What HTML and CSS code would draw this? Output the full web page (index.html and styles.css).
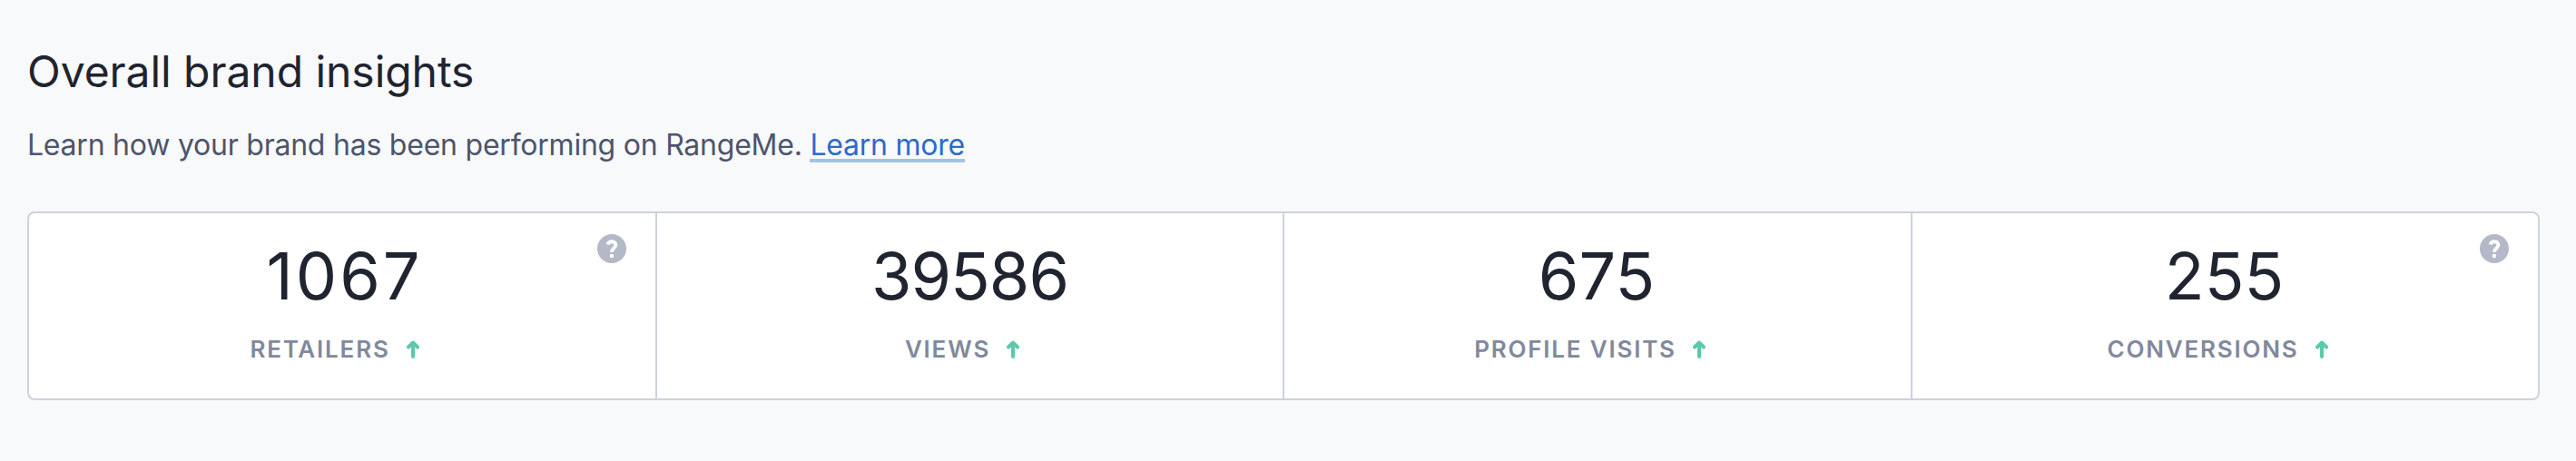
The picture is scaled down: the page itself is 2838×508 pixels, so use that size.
FILE: index.html
```html
<!DOCTYPE html>
<html lang="en">
<head>
    <meta charset="UTF-8">
    <meta name="viewport" content="width=device-width, initial-scale=1.0">
    <title>Overall brand insights</title>
    <link rel="stylesheet" href="styles.css">
</head>
<body>
    <!-- Shared icons -->
    <svg class="icon-defs" aria-hidden="true">
        <symbol id="icon-up" viewBox="0 0 14 20">
            <path d="M7 18V3M2 7.5L7 2.5l5 5" fill="none" stroke="currentColor" stroke-width="4" stroke-linecap="round" stroke-linejoin="round"/>
        </symbol>
        <symbol id="icon-help" viewBox="0 0 32 32">
            <circle cx="16" cy="16" r="16" fill="currentColor"/>
            <path d="M11.6 11.6C12.2 9.4 13.8 8.2 16 8.2c2.6 0 4.4 1.5 4.4 3.8 0 3.4-4.5 3.6-4.5 7.8" fill="none" stroke="#fff" stroke-width="3.9"/>
            <circle cx="15.9" cy="24" r="2.2" fill="#fff"/>
        </symbol>
    </svg>

    <div class="insights">
        <h1>Overall brand insights</h1>
        <p class="intro">Learn how your brand has been performing on RangeMe. <a href="#" class="learn-more">Learn more</a></p>

        <div class="stats">
            <div class="stat retailers">
                <div class="value">1067</div>
                <div class="label"><span>Retailers</span><svg class="arrow"><use href="#icon-up"/></svg></div>
                <svg class="help"><use href="#icon-help"/></svg>
            </div>
            <div class="stat views">
                <div class="value">39586</div>
                <div class="label"><span>Views</span><svg class="arrow"><use href="#icon-up"/></svg></div>
            </div>
            <div class="stat visits">
                <div class="value">675</div>
                <div class="label"><span>Profile visits</span><svg class="arrow"><use href="#icon-up"/></svg></div>
            </div>
            <div class="stat conversions">
                <div class="value">255</div>
                <div class="label"><span>Conversions</span><svg class="arrow"><use href="#icon-up"/></svg></div>
                <svg class="help"><use href="#icon-help"/></svg>
            </div>
        </div>
    </div>
</body>
</html>
```
FILE: styles.css
```css
* {
    box-sizing: border-box;
}
body {
    margin: 0;
    font-family: Inter, "Liberation Sans", sans-serif;
    background: #f8f9fb;
    color: #1f2430;
}
.icon-defs {
    display: none;
}
.insights {
    padding: 48px 40px 0 30px;
}
h1 {
    margin: 0;
    font-size: 48px;
    font-weight: 400;
    line-height: 62px;
    letter-spacing: -0.05px;
}
.intro {
    margin: 26px 0 50px;
    font-size: 32px;
    line-height: 47px;
    letter-spacing: -0.23px;
    color: #4c556c;
}
.learn-more {
    color: #2c6acb;
    text-decoration: none;
    border-bottom: 4px solid #a0c4e8;
    display: inline-block;
    line-height: 31px;
}
.stats {
    display: grid;
    grid-template-columns: 692px 691px 692px 1fr;
    height: 208px;
}
.stat {
    position: relative;
    padding-top: 30px;
    background: white;
    border: 2px solid #ced2dc;
    border-right: 0;
    text-align: center;
}
.stat:first-child {
    border-radius: 8px 0 0 8px;
}
.stat:last-child {
    border-right: 2px solid #ced2dc;
    border-radius: 0 8px 8px 0;
}
.value {
    padding-right: 2px;
    font-size: 72px;
    line-height: 77px;
}
.retailers .value {
    padding: 0 0 0 5px;
    letter-spacing: 3px;
}
.views .value {
    padding-right: 0;
    letter-spacing: -1px;
}
.label {
    display: flex;
    justify-content: center;
    align-items: center;
    gap: 18px;
    margin-top: 25px;
    padding-right: 17px;
    font-size: 26px;
    line-height: 36px;
    font-weight: 600;
    letter-spacing: 1.8px;
    text-transform: uppercase;
    color: #81899c;
}
.arrow {
    width: 14px;
    height: 20px;
    color: #5bc9ad;
}
.help {
    position: absolute;
    top: 23px;
    right: 32px;
    width: 32px;
    height: 32px;
    color: #b4b9c7;
}
```
